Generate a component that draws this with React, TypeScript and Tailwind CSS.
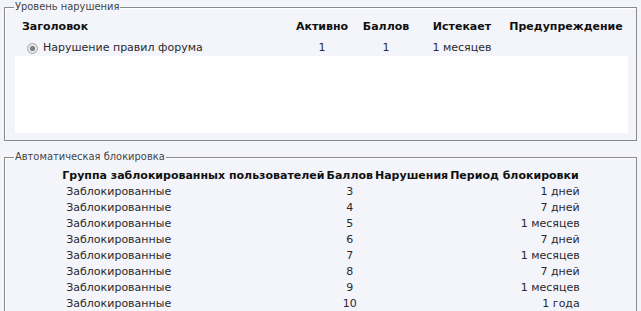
import React from 'react';

const bans: [number, string][] = [
  [3, '1 дней'],
  [4, '7 дней'],
  [5, '1 месяцев'],
  [6, '7 дней'],
  [7, '1 месяцев'],
  [8, '7 дней'],
  [9, '1 месяцев'],
  [10, '1 года'],
];

const body = "font-['DejaVu_Sans',Verdana,sans-serif] text-[11px] leading-[16px]";
const legend = "ml-[9px] px-[1px] font-['DejaVu_Sans_Condensed','DejaVu_Sans',sans-serif] text-[11px] leading-[14px] text-[#444]";

export default function App() {
  return (
    <div className={`min-h-[311px] bg-[#f4f4fb] px-[4px] ${body} text-[#2a2a2a]`}>
      <fieldset className="border border-[#8a8a8a] shadow-[inset_1px_1px_0_#fff] pb-[7px]">
        <legend className={legend}>Уровень нарушения</legend>
        <div className="mt-[5px] grid h-[16px] grid-cols-[288px_58px_70px_82px_126px] items-center font-bold text-[#111]">
          <div className="pl-[17px]">Заголовок</div>
          <div className="text-center">Активно</div>
          <div className="text-center">Баллов</div>
          <div className="text-center">Истекает</div>
          <div className="text-center">Предупреждение</div>
        </div>
        <div className="mt-[5px] grid h-[16px] grid-cols-[288px_58px_70px_82px_126px] items-center">
          <div className="flex items-center pl-[22px]">
            <span className="flex h-[11px] w-[11px] items-center justify-center rounded-full border border-[#a9a9a9] bg-[#e6e6e6]">
              <span className="h-[5px] w-[5px] rounded-full bg-[#7a7a7a]" />
            </span>
            <span className="ml-[5px]">Нарушение правил форума</span>
          </div>
          <div className="text-center">1</div>
          <div className="text-center">1</div>
          <div className="text-center">1 месяцев</div>
          <div />
        </div>
        <div className="ml-[10px] mr-[8px] h-[77px] bg-white" />
      </fieldset>

      <fieldset className="mt-[9px] border border-[#8a8a8a] shadow-[inset_1px_1px_0_#fff] pb-[10px]">
        <legend className={legend}>Автоматическая блокировка</legend>
        <table className="mx-auto mt-[4px] border-collapse">
          <thead>
            <tr className="h-[16px] font-bold text-[#111]">
              <th className="px-[1px] text-left">Группа заблокированных пользователей</th>
              <th className="px-[1px] text-center">Баллов</th>
              <th className="px-[1px] text-center">Нарушения</th>
              <th className="px-[1px] text-right">Период блокировки</th>
            </tr>
          </thead>
          <tbody>
            {bans.map(([points, period]) => (
              <tr key={points} className="h-[16px]">
                <td className="pl-[5px]">Заблокированные</td>
                <td className="text-center">{points}</td>
                <td />
                <td className="text-right">{period}</td>
              </tr>
            ))}
          </tbody>
        </table>
      </fieldset>
    </div>
  );
}
